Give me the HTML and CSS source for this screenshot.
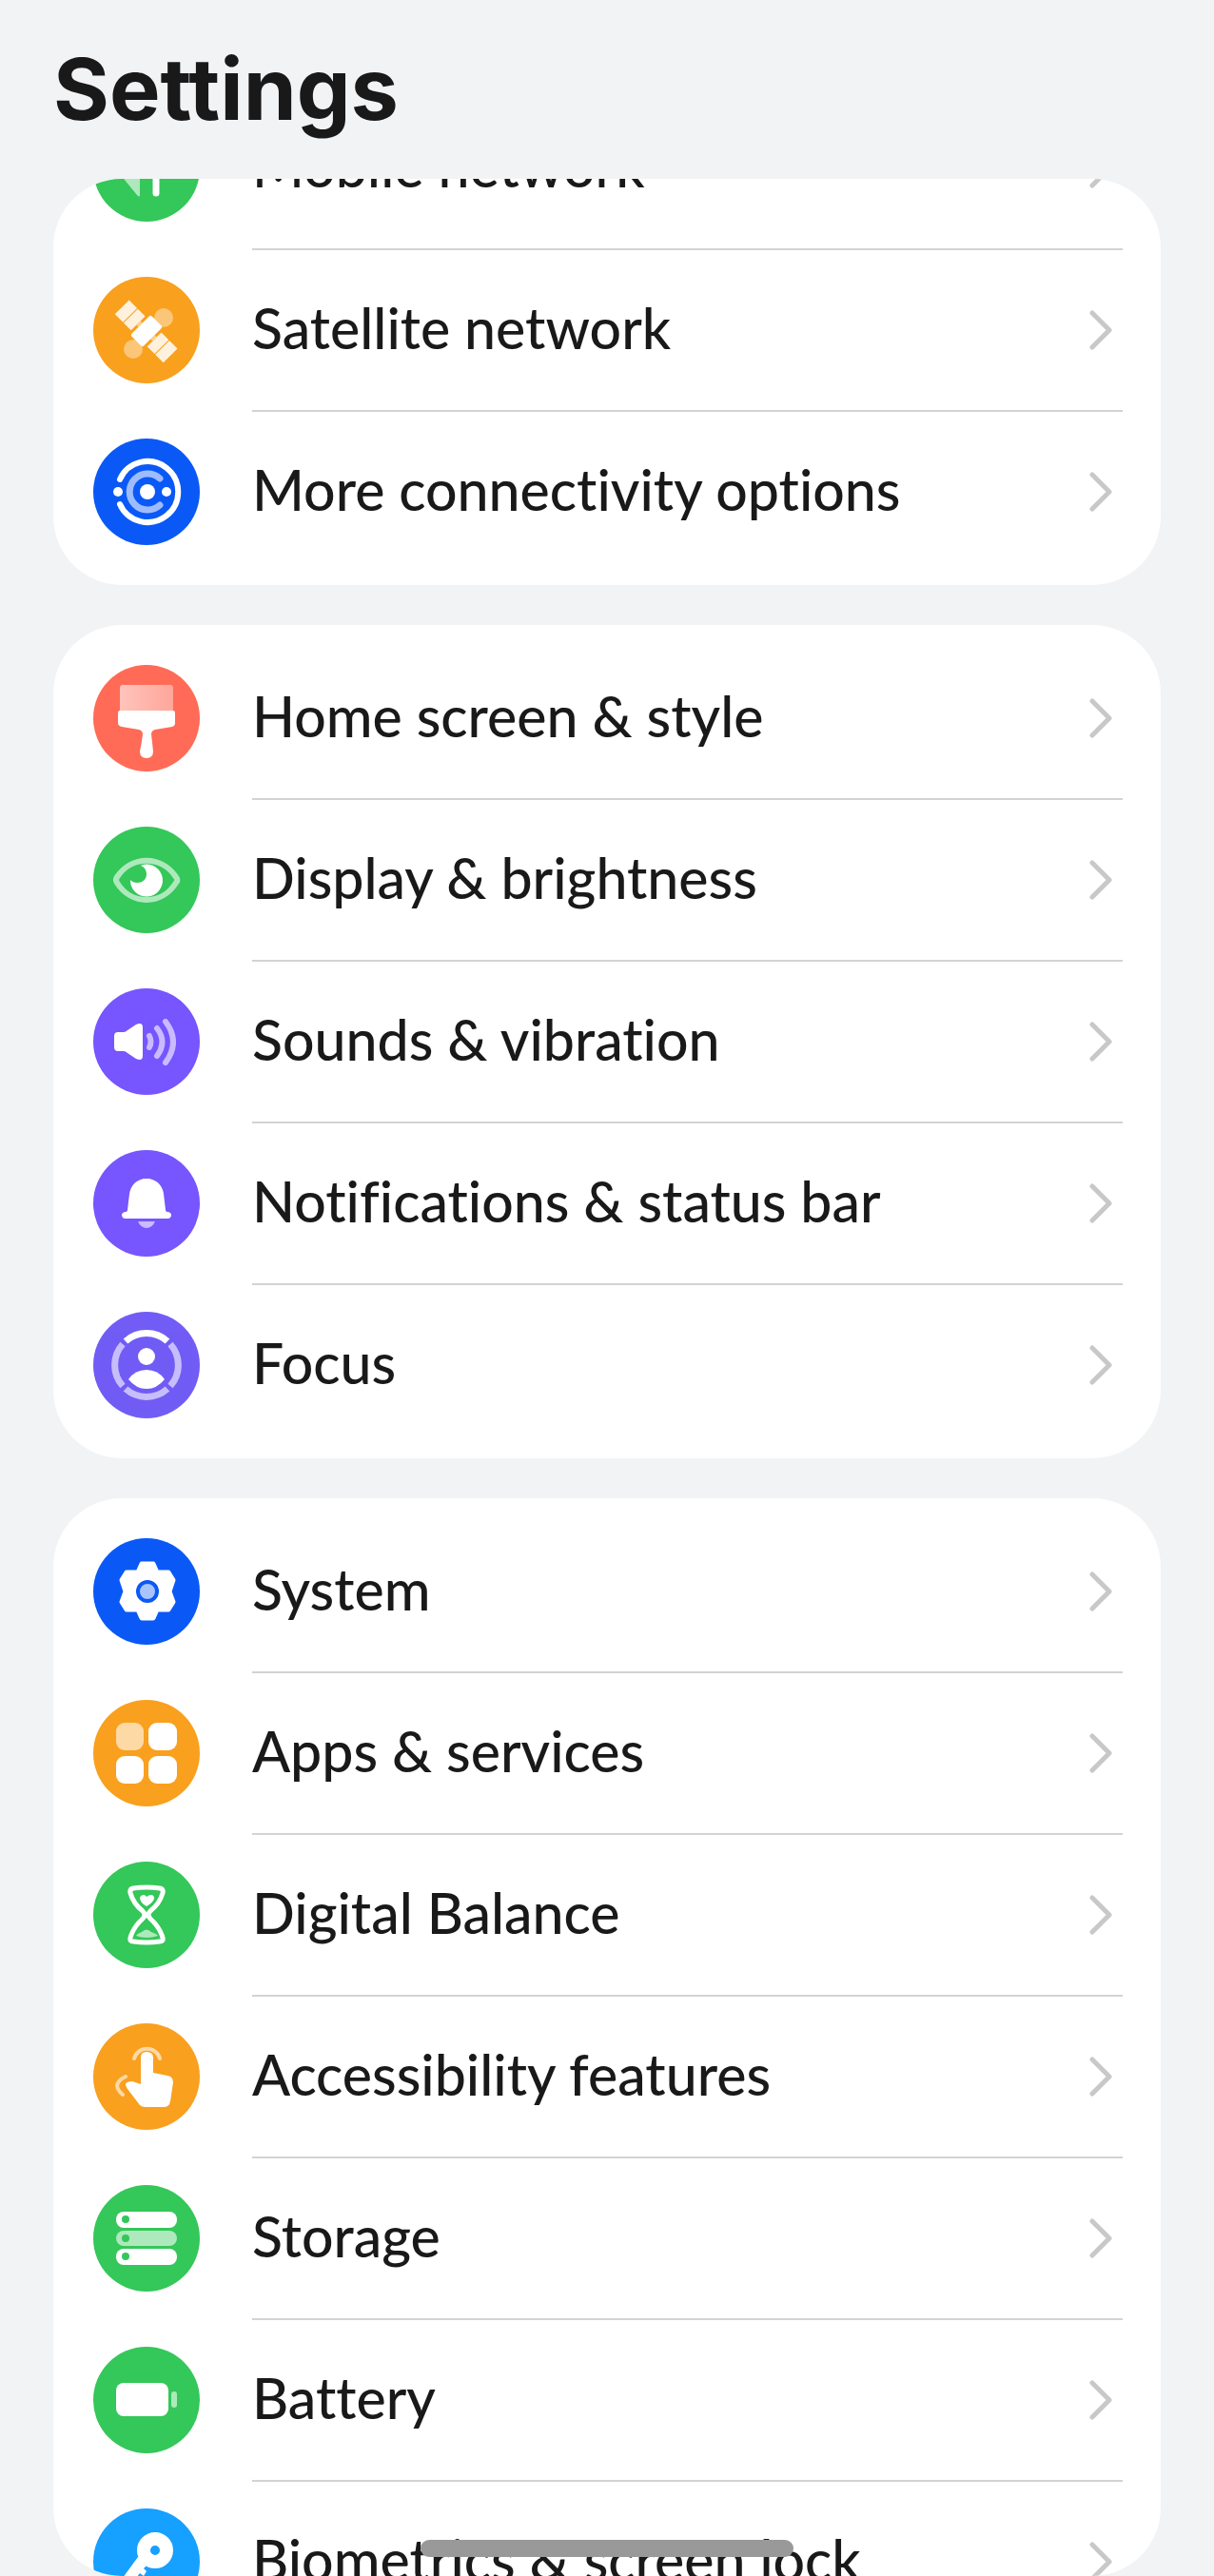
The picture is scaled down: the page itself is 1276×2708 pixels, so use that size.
FILE: index.html
```html
<!DOCTYPE html>
<html lang="en">
<head>
  <meta charset="utf-8">
  <meta name="viewport" content="width=device-width, initial-scale=1">
  <title>Settings</title>
  <link rel="stylesheet" href="styles.css">
</head>
<body>

<svg class="defs" aria-hidden="true">
  <symbol id="chevron" viewBox="0 0 24 42">
    <path d="M3 3 L21 21 L3 39" fill="none" stroke="#c8c8c8" stroke-width="5" stroke-linecap="round" stroke-linejoin="round"/>
  </symbol>
  <linearGradient id="bristle">
    <stop offset="0" stop-color="#fff" stop-opacity=".6"/>
    <stop offset="1" stop-color="#fff" stop-opacity=".4"/>
  </linearGradient>
</svg>

<header class="header">
  <h1>Settings</h1>
</header>

<main class="scroller">
  <div class="list">

    <!-- network -->
    <nav class="card">
      <a class="row" href="#">
        <svg class="icon green" viewBox="0 0 112 112">
          <path class="soft" d="M49 40 V84 Q49 87 46 84 L28 62 Z"/>
          <path class="line" d="M66 28 V82" stroke-width="7"/>
        </svg>
        <span class="body"><span class="label">Mobile network</span><svg class="chevron"><use href="#chevron"/></svg></span>
      </a>
      <a class="row" href="#">
        <svg class="icon orange" viewBox="0 0 112 112">
          <circle cx="74" cy="43" r="10" opacity=".4"/>
          <circle cx="42" cy="76" r="10" opacity=".4"/>
          <g transform="rotate(45 56 57)">
            <rect x="47" y="42" width="18" height="30" rx="2"/>
            <g opacity=".85">
              <rect x="20" y="47" width="12" height="21"/>
              <rect x="33" y="47" width="11" height="21"/>
              <rect x="68" y="47" width="11" height="21"/>
              <rect x="80" y="47" width="12" height="21"/>
            </g>
            <rect x="44" y="54" width="3" height="6" opacity=".5"/>
            <rect x="65" y="54" width="3" height="6" opacity=".5"/>
          </g>
        </svg>
        <span class="body"><span class="label">Satellite network</span><svg class="chevron"><use href="#chevron"/></svg></span>
      </a>
      <a class="row" href="#">
        <svg class="icon blue" viewBox="0 0 112 112">
          <path class="line" d="M28 43 A32 32 0 1 1 28 69" stroke-width="6"/>
          <path class="line" d="M70 42 A19 19 0 1 0 70 70" stroke-width="7" opacity=".6"/>
          <circle cx="57" cy="56" r="8"/>
          <circle cx="26" cy="56" r="5"/>
          <circle cx="77" cy="56" r="5"/>
        </svg>
        <span class="body"><span class="label">More connectivity options</span><svg class="chevron"><use href="#chevron"/></svg></span>
      </a>
    </nav>

    <!-- personalisation -->
    <nav class="card">
      <a class="row" href="#">
        <svg class="icon red" viewBox="0 0 112 112">
          <path fill="url(#bristle)" d="M28 48 V24 Q28 21 31 21 H81 Q84 21 84 24 V48 Z"/>
          <path d="M28 48 H84 Q86 48 86 51 V61 Q86 64 83 65 L65 68 Q61 69 61 73 Q62 81 63 91 Q63 98 56 98 Q49 98 49 91 Q51 81 52 73 Q52 69 48 68 L30 65 Q26 64 26 61 V51 Q26 48 28 48 Z"/>
        </svg>
        <span class="body"><span class="label">Home screen &amp; style</span><svg class="chevron"><use href="#chevron"/></svg></span>
      </a>
      <a class="row" href="#">
        <svg class="icon green" viewBox="0 0 112 112">
          <path class="line" d="M25 53 C40 30 72 30 87 53 Q90 56 87 59 C72 83 40 83 25 59 Q23 56 25 53 Z" stroke-width="6" opacity=".6"/>
          <path d="M52 40 A17 17 0 1 1 39 56 C43 61 56 60 56 50 C56 45 53 42 50 41 Z"/>
        </svg>
        <span class="body"><span class="label">Display &amp; brightness</span><svg class="chevron"><use href="#chevron"/></svg></span>
      </a>
      <a class="row" href="#">
        <svg class="icon violet" viewBox="0 0 112 112">
          <path d="M26 46 H32 Q34 46 36 44 L45 38 Q52 35 52 41 V71 Q52 77 45 74 L36 68 Q34 66 32 66 H26 Q22 66 22 62 V50 Q22 46 26 46 Z"/>
          <g class="line" stroke-width="6" opacity=".6">
            <path d="M59 50 Q62 56 59 62"/>
            <path d="M67 42 Q78 56 67 71"/>
            <path d="M76 35 Q92 56 76 78"/>
          </g>
        </svg>
        <span class="body"><span class="label">Sounds &amp; vibration</span><svg class="chevron"><use href="#chevron"/></svg></span>
      </a>
      <a class="row" href="#">
        <svg class="icon violet" viewBox="0 0 112 112">
          <path d="M56 30 C67 30 73 38 74 46 L76 63 Q76 65 79 65 Q82 66 82 68 Q82 72 78 72 H34 Q30 72 30 68 Q30 66 33 65 Q36 65 36 63 L38 46 C39 38 45 30 56 30 Z"/>
          <path class="soft" d="M47 75 H65 Q62 82 56 82 Q50 82 47 75 Z"/>
        </svg>
        <span class="body"><span class="label">Notifications &amp; status bar</span><svg class="chevron"><use href="#chevron"/></svg></span>
      </a>
      <a class="row" href="#">
        <svg class="icon indigo" viewBox="0 0 112 112">
          <g fill="none" stroke="#fff" stroke-width="7">
            <path d="M34 31 A33 33 0 0 1 78 31"/>
            <g opacity=".6">
              <path d="M81 34 A33 33 0 0 1 81 78"/>
              <path d="M78 81 A33 33 0 0 1 34 81"/>
              <path d="M31 78 A33 33 0 0 1 31 34"/>
            </g>
          </g>
          <circle cx="56" cy="47" r="9"/>
          <path d="M37 71 Q44 61 56 61 Q68 61 75 71 Q67 81 56 81 Q45 81 37 71 Z"/>
        </svg>
        <span class="body"><span class="label">Focus</span><svg class="chevron"><use href="#chevron"/></svg></span>
      </a>
    </nav>

    <!-- device -->
    <nav class="card">
      <a class="row" href="#">
        <svg class="icon blue" viewBox="0 0 112 112">
          <path d="M51 27 H63 L67 36 H79 L84 44 L80 56 L84 67 L79 75 H67 L63 84 H51 L47 75 H35 L30 67 L34 56 L30 44 L35 36 H47 Z" stroke="#fff" stroke-width="5" stroke-linejoin="round"/>
          <circle cx="57" cy="56" r="10" fill="#a9c4fd" stroke="#0a59f7" stroke-width="4"/>
        </svg>
        <span class="body"><span class="label">System</span><svg class="chevron"><use href="#chevron"/></svg></span>
      </a>
      <a class="row" href="#">
        <svg class="icon orange" viewBox="0 0 112 112">
          <rect class="soft" x="24" y="24" width="29" height="29" rx="9"/>
          <rect x="58" y="24" width="30" height="29" rx="9"/>
          <rect x="24" y="59" width="29" height="29" rx="9"/>
          <rect x="58" y="59" width="30" height="29" rx="9"/>
        </svg>
        <span class="body"><span class="label">Apps &amp; services</span><svg class="chevron"><use href="#chevron"/></svg></span>
      </a>
      <a class="row" href="#">
        <svg class="icon green" viewBox="0 0 112 112">
          <path class="line" d="M42 28 Q56 26 70 28 Q74 29 73 33 Q70 44 60 52 Q56 56 60 60 Q70 69 73 80 Q74 84 70 84 Q56 86 42 84 Q38 84 39 80 Q42 69 52 60 Q56 56 52 52 Q42 44 39 33 Q38 29 42 28 Z" stroke-width="5"/>
          <path d="M56 47 Q49 43 49 38 Q50 35 53 35 Q55 35 56 37 Q58 35 61 35 Q64 35 64 39 Q63 43 56 47 Z"/>
          <path class="soft" d="M45 78 Q46 76 51 74 Q56 69 61 74 Q67 76 68 78 Q56 82 45 78 Z"/>
        </svg>
        <span class="body"><span class="label">Digital Balance</span><svg class="chevron"><use href="#chevron"/></svg></span>
      </a>
      <a class="row" href="#">
        <svg class="icon orange" viewBox="0 0 112 112">
          <g class="line" stroke-width="4" opacity=".6">
            <path d="M43 37 A14 14 0 0 1 70 37"/>
            <path d="M34 56 Q18 64 31 75"/>
          </g>
          <path d="M50 36 Q50 30 56 30 Q63 30 63 36 V52 L78 55 Q84 56 84 62 L81 82 Q80 88 74 88 H55 Q51 88 49 86 L36 69 Q32 63 36 62 Q40 60 44 62 L50 64 Z"/>
        </svg>
        <span class="body"><span class="label">Accessibility features</span><svg class="chevron"><use href="#chevron"/></svg></span>
      </a>
      <a class="row" href="#">
        <svg class="icon green" viewBox="0 0 112 112">
          <rect x="24" y="28" width="64" height="17" rx="8"/>
          <rect class="soft" x="24" y="48" width="64" height="16" rx="8"/>
          <rect x="24" y="67" width="64" height="17" rx="8"/>
          <g fill="#34c759">
            <circle cx="34" cy="36" r="4"/>
            <circle cx="34" cy="56" r="4"/>
            <circle cx="34" cy="75" r="4"/>
          </g>
        </svg>
        <span class="body"><span class="label">Storage</span><svg class="chevron"><use href="#chevron"/></svg></span>
      </a>
      <a class="row" href="#">
        <svg class="icon green" viewBox="0 0 112 112">
          <rect x="24" y="38" width="55" height="35" rx="8"/>
          <rect class="soft" x="82" y="47" width="6" height="17" rx="3"/>
        </svg>
        <span class="body"><span class="label">Battery</span><svg class="chevron"><use href="#chevron"/></svg></span>
      </a>
      <a class="row" href="#">
        <svg class="icon sky" viewBox="0 0 112 112">
          <circle cx="65" cy="44" r="12" fill="none" stroke="#fff" stroke-width="14"/>
          <path d="M47 51 L28 77 L36 85 L49 68 L53 71 L56 66 L53 63 L58 58 Z"/>
        </svg>
        <span class="body"><span class="label">Biometrics &amp; screen lock</span><svg class="chevron"><use href="#chevron"/></svg></span>
      </a>
    </nav>

  </div>
</main>

<div class="home-bar"></div>

</body>
</html>
```
FILE: styles.css
```css
*{
box-sizing: border-box;
}
body{
display: flex;
flex-direction: column;
height: 100vh;
margin: 0;
padding: 0 56px;
overflow: hidden;
background-color: #f1f3f5;
color: #191919;
font-family: Lato, "Noto Sans", sans-serif;
font-variant-ligatures: none;
}
.defs{
position: absolute;
width: 0;
height: 0;
}
.header{
display: flex;
flex: none;
align-items: center;
height: 188px;
}
h1{
margin: 0;
font-family: Inter, "Noto Sans", sans-serif;
font-size: 90px;
font-weight: 700;
line-height: 188px;
}
.scroller{
flex: 1;
min-height: 0;
overflow: hidden;
border-radius: 72px;
}
/* list is scrolled past its first row */
.list{
display: flex;
flex-direction: column;
gap: 42px;
margin-top: -109px;
}
.card{
padding: 13px 40px 13px 42px;
border-radius: 72px;
background-color: white;
}
.row{
display: flex;
align-items: center;
gap: 55px;
height: 170px;
color: inherit;
text-decoration: none;
}
.icon{
flex: none;
width: 112px;
height: 112px;
border-radius: 50%;
fill: white;
}
/* the divider straddles the edge between two rows */
.body{
display: flex;
flex: 1;
align-items: center;
justify-content: space-between;
height: 171px;
margin-bottom: -1px;
padding-right: 11px;
border-bottom: 2px solid #d3d3d3;
}
.row:last-child .body{
border-bottom-color: transparent;
}
.label{
padding-bottom: 3px;
font-size: 59px;
font-weight: 500;
line-height: 72px;
white-space: nowrap;
}
.chevron{
flex: none;
width: 24px;
height: 42px;
}
.soft{
opacity: .6;
}
.line{
fill: none;
stroke: white;
stroke-linecap: round;
stroke-linejoin: round;
}
.green{
background-color: #34c759;
}
.orange{
background-color: #f9a01e;
}
.blue{
background-color: #0a59f7;
}
.red{
background-color: #ff6b57;
}
.violet{
background-color: #7755ff;
}
.indigo{
background-color: #715df5;
}
.sky{
background-color: #16a0ff;
}
.home-bar{
position: fixed;
bottom: 20px;
left: 50%;
width: 392px;
height: 18px;
margin-left: -196px;
border-radius: 9px;
background-color: #999;
}
```
